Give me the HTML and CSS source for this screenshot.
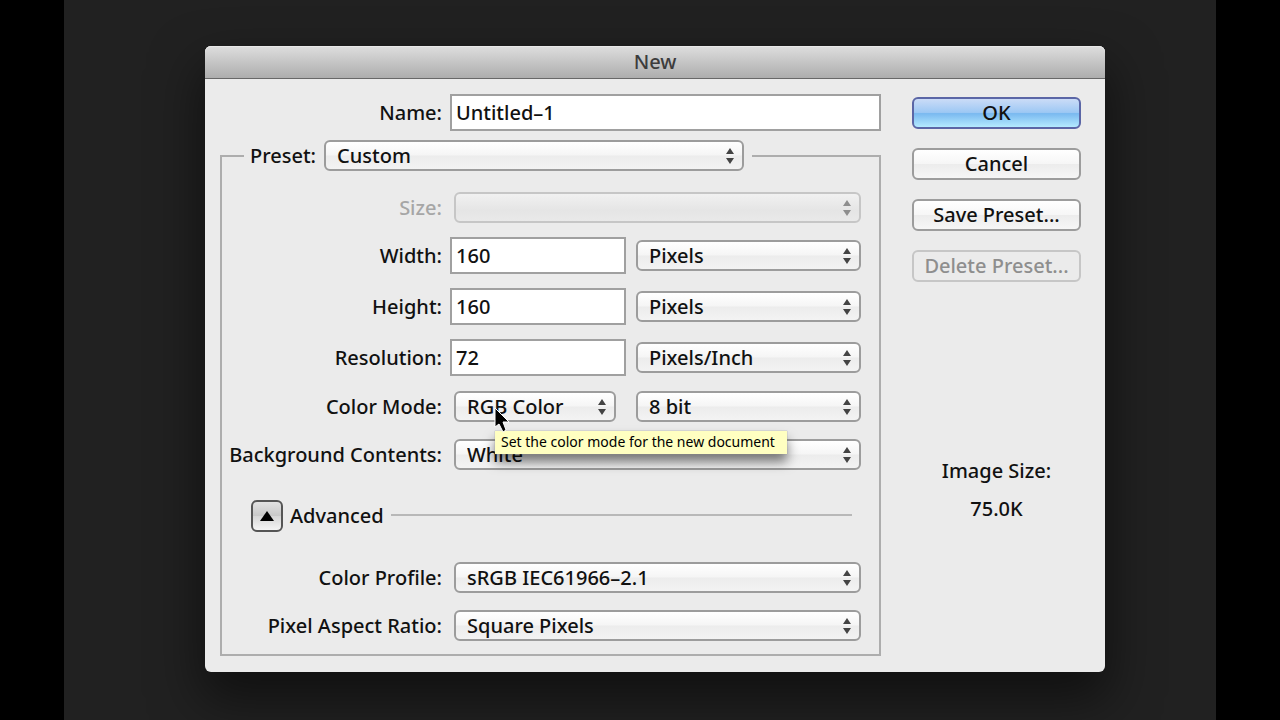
FILE: index.html
```html
<!DOCTYPE html>
<html lang="en">
<head>
<meta charset="utf-8">
<title>New</title>
<link rel="stylesheet" href="styles.css">
</head>
<body>
<svg class="defs" aria-hidden="true">
  <symbol id="arrows" viewBox="0 0 8 16"><path d="M4 0 8 6H0ZM0 10H8L4 16Z"/></symbol>
</svg>
<main class="stage">
  <form class="dialog">
    <h1 class="titlebar">New</h1>
    <div class="content">
      <div class="settings">
        <div class="row">
          <label for="name">Name:</label>
          <input class="wide" id="name" type="text" value="Untitled–1">
        </div>
        <fieldset class="group">
          <legend class="preset">
            <label for="preset">Preset:</label>
            <span class="popup"><select id="preset"><option>Custom</option></select><svg class="arrows"><use href="#arrows"/></svg></span>
          </legend>
          <div class="rows fields">
            <div class="row disabled">
              <label for="size">Size:</label>
              <span class="popup inset wide"><select id="size" disabled><option></option></select><svg class="arrows"><use href="#arrows"/></svg></span>
            </div>
            <div class="row">
              <label for="width">Width:</label>
              <input id="width" type="text" value="160">
              <span class="popup"><select aria-label="Width unit"><option>Pixels</option></select><svg class="arrows"><use href="#arrows"/></svg></span>
            </div>
            <div class="row">
              <label for="height">Height:</label>
              <input id="height" type="text" value="160">
              <span class="popup"><select aria-label="Height unit"><option>Pixels</option></select><svg class="arrows"><use href="#arrows"/></svg></span>
            </div>
            <div class="row">
              <label for="resolution">Resolution:</label>
              <input id="resolution" type="text" value="72">
              <span class="popup"><select aria-label="Resolution unit"><option>Pixels/Inch</option></select><svg class="arrows"><use href="#arrows"/></svg></span>
            </div>
          </div>
          <div class="rows modes">
            <div class="row">
              <label for="mode">Color Mode:</label>
              <span class="popup inset short"><select id="mode" aria-describedby="mode-tip"><option>RGB Color</option></select><svg class="arrows"><use href="#arrows"/></svg>
                <span class="tooltip" id="mode-tip" role="tooltip">Set the color mode for the new document</span>
                <svg class="cursor" viewBox="0 0 16 26" aria-hidden="true"><path d="M1 1V20L5 17L9 25L12 23L9 15H15Z"/></svg>
              </span>
              <span class="popup"><select aria-label="Bit depth"><option>8 bit</option></select><svg class="arrows"><use href="#arrows"/></svg></span>
            </div>
            <div class="row">
              <label for="background">Background Contents:</label>
              <span class="popup inset wide"><select id="background"><option>White</option></select><svg class="arrows"><use href="#arrows"/></svg></span>
            </div>
          </div>
          <div class="advanced">
            <button class="toggle" id="advanced" type="button" aria-expanded="true" aria-label="Advanced"><svg viewBox="0 0 14 10"><path d="M7 0 14 10H0Z"/></svg></button>
            <label for="advanced">Advanced</label>
            <hr class="rule">
          </div>
          <div class="rows profiles">
            <div class="row">
              <label for="profile">Color Profile:</label>
              <span class="popup inset wide"><select id="profile"><option>sRGB IEC61966–2.1</option></select><svg class="arrows"><use href="#arrows"/></svg></span>
            </div>
            <div class="row">
              <label for="ratio">Pixel Aspect Ratio:</label>
              <span class="popup inset wide"><select id="ratio"><option>Square Pixels</option></select><svg class="arrows"><use href="#arrows"/></svg></span>
            </div>
          </div>
        </fieldset>
      </div>
      <div class="side">
        <button class="button primary" type="button">OK</button>
        <button class="button" type="button">Cancel</button>
        <button class="button" type="button">Save Preset...</button>
        <button class="button" type="button" disabled>Delete Preset...</button>
        <div class="image-size"><span>Image Size:</span><span>75.0K</span></div>
      </div>
    </div>
  </form>
</main>
</body>
</html>
```
FILE: styles.css
```css
* { box-sizing: border-box; }

body {
  margin: 0;
  background: #000;
  color: #111;
  font: 500 20px/28px "Noto Sans", "Open Sans", sans-serif;
}

.defs { position: absolute; width: 0; height: 0; }

.stage {
  display: grid;
  grid-template-columns: 141fr 900fr 111fr;
  align-items: start;
  min-height: 100vh;
  margin: 0 5%;
  padding: 46px 0 48px;
  overflow: hidden;
  background: #212121;
}

.dialog {
  grid-column: 2;
  border-radius: 6px;
  background: #ebebeb;
  box-shadow: 0 24px 50px 4px rgba(0, 0, 0, .5);
}

.titlebar {
  height: 33px;
  margin: 0;
  border-bottom: 1px solid #686868;
  border-radius: 6px 6px 0 0;
  background: linear-gradient(#dedede, #adadad);
  box-shadow: inset 0 1px #e8e8e8;
  color: #3c3c3c;
  font: inherit;
  line-height: 32px;
  text-align: center;
}

.content {
  display: grid;
  grid-template-columns: 1fr 169px;
  gap: 31px;
  padding: 15px 24px 16px 15px;
}

.row {
  display: grid;
  grid-template-columns: 222px 1fr;
  column-gap: 8px;
  align-items: center;
}
.row > label { justify-self: end; white-space: nowrap; }

.group .row { grid-template-columns: 208px 178fr 225fr; }
.group .row > input { margin-right: 2px; }
.group .wide { grid-column: 2 / 4; }

input {
  min-width: 0;
  height: 37px;
  padding: 0 4px;
  border: 2px solid #a0a0a0;
  background: #fff;
  color: #111;
  font: inherit;
}

.group {
  min-width: 0;
  margin: 9px 0 0;
  padding: 0;
  border: 2px solid #adadad;
}

.preset {
  display: flex;
  align-items: center;
  gap: 8px;
  width: calc(100% - 149px);
  margin-left: 22px;
  padding: 0 8px 0 6px;
}
.preset .popup { flex: 1; }

.popup { position: relative; display: block; min-width: 0; }
.inset { margin-left: 4px; }
.short { margin-right: 12px; }

select {
  display: block;
  width: 100%;
  height: 31px;
  padding: 0 28px 0 11px;
  border: 2px solid #9c9c9c;
  border-radius: 6px;
  appearance: none;
  background: linear-gradient(#fff, #f5f5f5 49%, #ececec 51%, #f3f3f3);
  color: #111;
  font: inherit;
  line-height: 26px;
}

select:disabled {
  border-color: #c6c6c6;
  background: linear-gradient(#f1f1f1, #e5e5e5 60%, #e9e9e9);
  opacity: 1;
}

.arrows {
  position: absolute;
  top: 8px;
  right: 10px;
  width: 8px;
  height: 16px;
  fill: #444;
  pointer-events: none;
}

.disabled { color: #a6a6a6; }
.disabled .arrows { fill: #8e8e8e; }

.rows {
  display: grid;
  padding: 0 18px 0 12px;
}
.fields { gap: 14px; padding-top: 21px; }
.modes { gap: 17px; padding-top: 15px; }
.profiles { gap: 17px; padding-top: 30px; padding-bottom: 13px; }

.tooltip {
  position: absolute;
  z-index: 1;
  top: 40px;
  left: 41px;
  padding: 0 12px 1px 6px;
  background: #ffffc1;
  box-shadow: 0 0 1px #888, 0 8px 12px rgba(0, 0, 0, .5);
  color: #000;
  font-size: 14px;
  font-weight: 400;
  line-height: 22px;
  white-space: nowrap;
}

.cursor {
  position: absolute;
  z-index: 2;
  top: 16px;
  left: 40px;
  width: 16px;
  height: 26px;
  fill: #000;
  stroke: #fff;
  stroke-width: 1;
}

.advanced {
  display: flex;
  align-items: center;
  gap: 7px;
  padding: 30px 27px 0 29px;
}

.toggle {
  display: grid;
  place-items: center;
  width: 32px;
  height: 32px;
  padding: 0;
  border: 2px solid #555;
  border-radius: 6px;
  background: linear-gradient(#e2e2e2, #c8c8c8 49%, #d6d6d6 51%, #f4f4f4);
}
.toggle svg { width: 14px; height: 10px; }

.rule {
  flex: 1;
  height: 2px;
  margin: 0 0 3px;
  border: 0;
  background: #b8b8b8;
}

.side {
  display: flex;
  flex-direction: column;
  gap: 19px;
  padding-top: 3px;
}

.button {
  height: 32px;
  padding: 0;
  border: 2px solid #9c9c9c;
  border-radius: 6px;
  background: linear-gradient(#fff, #f6f6f6 49%, #ececec 51%, #f6f6f6);
  color: #111;
  font: inherit;
  line-height: 26px;
}

.primary {
  border-color: #5b66a6;
  background: linear-gradient(#cbdcf7, #9dc8f4 48%, #7ab9f0 52%, #b4eaff);
}

.button:disabled {
  border-color: #c6c6c6;
  background: #ebebeb;
  color: #8e8e8e;
}

.image-size {
  display: grid;
  gap: 10px;
  margin-top: 156px;
  text-align: center;
}
```
